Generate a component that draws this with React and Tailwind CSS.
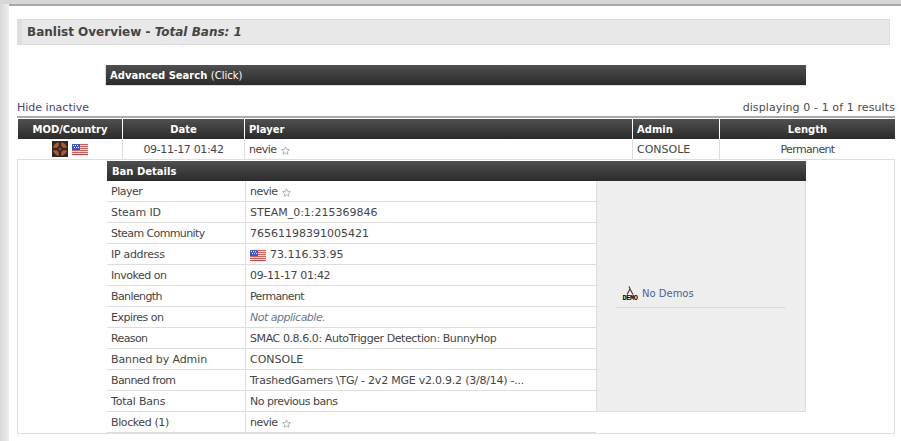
import React from 'react'

function Flag() {
    return (
        <svg className="shrink-0 block mt-px" width="16" height="11" viewBox="0 0 16 11" shapeRendering="crispEdges">
            <rect width="16" height="11" fill="#f6f0ee" />
            <rect y="0" width="16" height="1" fill="#e2574f" />
            <rect y="2" width="16" height="1" fill="#e2574f" />
            <rect y="4" width="16" height="1" fill="#e2574f" />
            <rect y="6" width="16" height="1" fill="#e2574f" />
            <rect y="8" width="16" height="1" fill="#e2574f" />
            <rect y="10" width="16" height="1" fill="#c9403c" />
            <rect width="8" height="6" fill="#3558d8" />
            <rect x="1" y="1" width="1" height="1" fill="#fff" />
            <rect x="3" y="1" width="1" height="1" fill="#fff" />
            <rect x="5" y="1" width="1" height="1" fill="#fff" />
            <rect x="2" y="3" width="1" height="1" fill="#fff" />
            <rect x="4" y="3" width="1" height="1" fill="#fff" />
            <rect x="6" y="3" width="1" height="1" fill="#fff" />
        </svg>
    )
}

function Tf2Icon() {
    return (
        <svg className="shrink-0 block" width="16" height="16" viewBox="0 0 16 16">
            <rect width="16" height="16" fill="#2b2a28" />
            <circle cx="8" cy="8" r="7" fill="#b5562a" />
            <rect x="6.8" y="0.5" width="2.4" height="15" fill="#2b2a28" />
            <rect x="0.5" y="6.8" width="15" height="2.4" fill="#2b2a28" />
            <circle cx="8" cy="8" r="3" fill="#2b2a28" />
            <circle cx="8" cy="8" r="1.5" fill="#8f4522" />
        </svg>
    )
}

function Star() {
    return (
        <svg className="inline-block ml-[4px] align-[-1px]" width="9" height="9" viewBox="0 0 24 24" fill="#fff" stroke="#aaa" strokeWidth="2.4">
            <path d="M12 2l3 7 7.5.6-5.7 4.9 1.8 7.5L12 18l-6.6 4 1.8-7.5L1.500 9.600 9 9z" />
        </svg>
    )
}

function Nevie() {
    return <><span className="tracking-[-0.5px]">nevie</span><Star /></>
}

function DemoIcon() {
    return (
        <span className="flex flex-col items-center w-[16px] leading-none">
            <svg width="10" height="9" viewBox="0 0 10 9">
                <path d="M2 8.500L5 3 4 .5M5 3l3 5.500" fill="none" stroke="#444" strokeWidth="1.200" />
            </svg>
            <span className="text-[7px] font-bold text-black tracking-[-0.5px] [font-family:'Liberation_Mono',monospace] h-[7px] leading-[7px]">DEMO</span>
        </span>
    )
}

const barClass = "bg-gradient-to-b from-[#505050] to-[#2b2b2b] text-white font-bold text-[10px] pt-px"

const details = [
    { label: 'Player', labelClass: 'tracking-[-0.5px]', value: <Nevie /> },
    { label: 'Steam ID', labelClass: 'tracking-[-0.1px]', value: 'STEAM_0:1:215369846' },
    { label: 'Steam Community', labelClass: 'tracking-[-0.6px]', value: '76561198391005421' },
    { label: 'IP address', labelClass: 'tracking-[-0.3px]', value: <span className="flex items-center gap-[4px]"><Flag /><span>73.116.33.95</span></span> },
    { label: 'Invoked on', labelClass: 'tracking-[-0.5px]', value: <span className="tracking-[-0.35px]">09-11-17 01:42</span> },
    { label: 'Banlength', labelClass: 'tracking-[-0.6px]', value: <span className="tracking-[-0.65px]">Permanent</span> },
    { label: 'Expires on', labelClass: 'tracking-[-0.5px]', value: <i className="text-[#68788a] tracking-[-0.5px]">Not applicable.</i> },
    { label: 'Reason', labelClass: 'tracking-[-0.6px]', value: <span className="tracking-[-0.42px]">SMAC 0.8.6.0: AutoTrigger Detection: BunnyHop</span> },
    { label: 'Banned by Admin', labelClass: 'tracking-[-0.1px]', value: 'CONSOLE' },
    { label: 'Banned from', labelClass: 'tracking-[-0.6px]', value: <span className="tracking-[-0.23px]">TrashedGamers \TG/ - 2v2 MGE v2.0.9.2 (3/8/14) -...</span> },
    { label: 'Total Bans', labelClass: 'tracking-[-0.2px]', value: <span className="tracking-[-0.5px]">No previous bans</span> },
]

function DetailRow({ label, labelClass, value }) {
    return (
        <div className="flex h-[21px] border-b border-[#ddd]">
            <div className={`w-[139px] flex items-center pt-[2px] pl-[4px] border-r border-[#ddd] shrink-0 ${labelClass}`}>{label}</div>
            <div className="pl-[4px] pt-[2px] whitespace-nowrap flex items-center">{value}</div>
        </div>
    )
}

export default function App() {
    return (
        <div className="w-[901px] h-[441px] overflow-hidden bg-white text-[11px] leading-[16px] text-[#444] [font-family:'DejaVu_Sans',Verdana,sans-serif]">
            <div className="h-[4px] bg-[#d6d6d6]" />
            <div className="flex h-[437px]">
                <div className="w-[9px] shrink-0 bg-gradient-to-r from-[#d8d8d8] to-[#eeeeee]" />
                <div className="flex-1 min-w-0">
                    <div className="h-[2px] bg-[#a9a9a9]" />

                    <div className="ml-[8px] mt-[13px] w-[873px] h-[26px] flex items-center bg-[#e8e8e8] border border-[#dedede] border-l-[5px] pl-[5px] text-[12px] font-bold text-[#444]">
                        <span>Banlist Overview - <i>Total Bans: 1</i></span>
                    </div>

                    <div className={`ml-[96px] mt-[20px] w-[701px] h-[21px] border-l border-b border-[#ddd] flex items-center pl-[4px] ${barClass}`}>
                        <span>Advanced Search <span className="font-normal">(Click)</span></span>
                    </div>

                    <div className="ml-[8px] mt-[13px] w-[878px] h-[16px] pt-[2px] flex items-center justify-between">
                        <span className="text-[#4b4370]">Hide inactive</span>
                        <span className="text-[#4a4a4a] tracking-[0.1px]">displaying 0 - 1 of 1 results</span>
                    </div>

                    <div className="ml-[8px] w-[878px] mt-[1px] border-t-[2px] border-[#aaaaaa] pt-[1px]">
                        <div className="grid grid-cols-[105px_122px_388px_87px_175px] h-[20px] pl-[1px]">
                            <div className={`${barClass} flex items-center justify-center border-r border-white`}>MOD/Country</div>
                            <div className={`${barClass} flex items-center justify-center border-r border-white`}>Date</div>
                            <div className={`${barClass} flex items-center pl-[4px] border-r border-white`}>Player</div>
                            <div className={`${barClass} flex items-center pl-[4px] border-r border-white`}>Admin</div>
                            <div className={`${barClass} flex items-center justify-center`}>Length</div>
                        </div>
                        <div className="grid grid-cols-[105px_122px_388px_87px_175px] h-[21px] border-b border-[#ddd] pl-[1px]">
                            <div className="flex items-center justify-center gap-[4px] border-r border-[#ddd]">
                                <Tf2Icon />
                                <Flag />
                            </div>
                            <div className="flex items-center justify-center pt-[2px] border-r border-[#ddd] tracking-[-0.35px]">09-11-17 01:42</div>
                            <div className="flex items-center pl-[4px] pt-[2px] border-r border-[#ddd]"><Nevie /></div>
                            <div className="flex items-center pl-[4px] pt-[2px] border-r border-[#ddd]">CONSOLE</div>
                            <div className="flex items-center justify-center pt-[2px] tracking-[-0.65px]">Permanent</div>
                        </div>

                        <div className="h-[274px] border border-t-0 border-[#ddd] pl-[89px] pt-[1px]">
                            <div className="w-[699px]">
                                <div className={`h-[20px] flex items-center pl-[5px] ${barClass}`}>Ban Details</div>
                                <div className="flex items-start">
                                    <div className="w-[489px]">
                                        {details.map(row => (
                                            <DetailRow key={row.label} {...row} />
                                        ))}
                                        <div className="flex h-[22px] border-b-[2px] border-[#ddd]">
                                            <div className="w-[139px] flex items-center pt-[2px] pl-[4px] border-r border-[#ddd] shrink-0 tracking-[-0.4px]">Blocked (1)</div>
                                            <div className="pl-[4px] pt-[2px] flex items-center"><Nevie /></div>
                                        </div>
                                    </div>
                                    <div className="w-[210px] h-[231px] bg-[#eeeeee] border-x-[1px] border-b-[1px] border-[#ddd] flex flex-col items-stretch pt-[103px] px-[19px]">
                                        <div className="flex items-center gap-[4px] h-[20px] ml-[6px] text-[#4a6296] text-[10px]">
                                            <DemoIcon />
                                            <span>No Demos</span>
                                        </div>
                                        <div className="mt-[3px] border-t border-[#dcdcdc]" />
                                    </div>
                                </div>
                            </div>
                        </div>
                    </div>
                </div>
            </div>
        </div>
    )
}
